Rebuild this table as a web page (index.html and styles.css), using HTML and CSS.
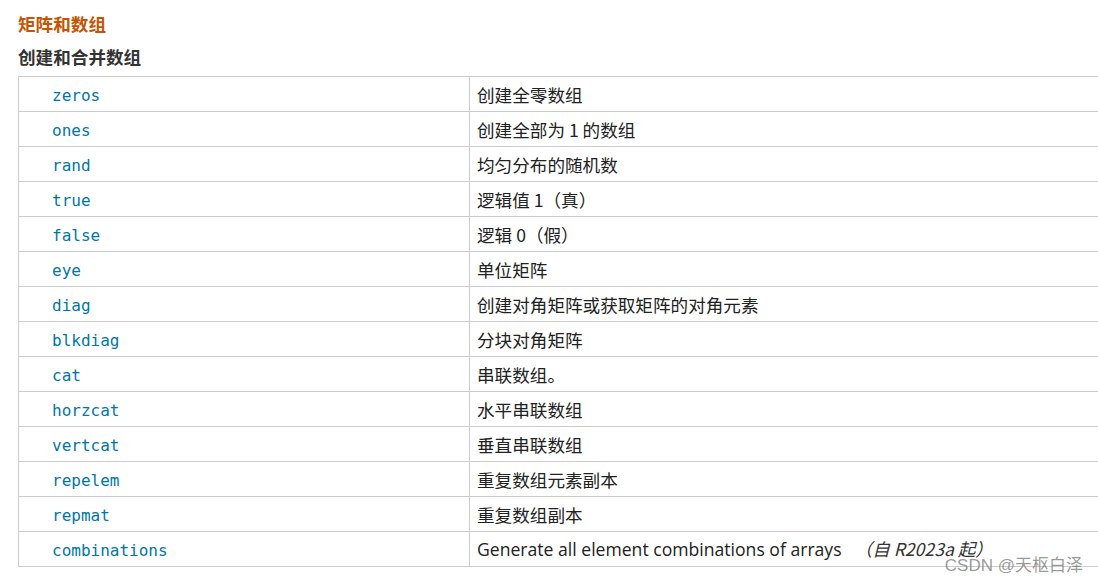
FILE: index.html
```html
<!DOCTYPE html>
<html lang="zh">
<head>
<meta charset="utf-8">
<link rel="stylesheet" href="styles.css">
</head>
<body>
<div class="page">
  <h2 class="title">矩阵和数组</h2>
  <h3 class="subtitle">创建和合并数组</h3>
  <table class="ref">
    <tr><td class="fn"><code>zeros</code></td><td class="desc">创建全零数组</td></tr>
    <tr><td class="fn"><code>ones</code></td><td class="desc">创建全部为 1 的数组</td></tr>
    <tr><td class="fn"><code>rand</code></td><td class="desc">均匀分布的随机数</td></tr>
    <tr><td class="fn"><code>true</code></td><td class="desc">逻辑值 1（真）</td></tr>
    <tr><td class="fn"><code>false</code></td><td class="desc">逻辑 0（假）</td></tr>
    <tr><td class="fn"><code>eye</code></td><td class="desc">单位矩阵</td></tr>
    <tr><td class="fn"><code>diag</code></td><td class="desc">创建对角矩阵或获取矩阵的对角元素</td></tr>
    <tr><td class="fn"><code>blkdiag</code></td><td class="desc">分块对角矩阵</td></tr>
    <tr><td class="fn"><code>cat</code></td><td class="desc">串联数组。</td></tr>
    <tr><td class="fn"><code>horzcat</code></td><td class="desc">水平串联数组</td></tr>
    <tr><td class="fn"><code>vertcat</code></td><td class="desc">垂直串联数组</td></tr>
    <tr><td class="fn"><code>repelem</code></td><td class="desc">重复数组元素副本</td></tr>
    <tr><td class="fn"><code>repmat</code></td><td class="desc">重复数组副本</td></tr>
    <tr><td class="fn"><code>combinations</code></td><td class="desc"><span class="en">Generate all element combinations of arrays</span> <em class="since">（自 R2023a 起）</em></td></tr>
  </table>
  <div class="watermark">CSDN @天枢白泽</div>
</div>
</body>
</html>
```
FILE: styles.css
```css
html, body {
  margin: 0;
  padding: 0;
  background: #ffffff;
  overflow: hidden;
}
.page {
  position: relative;
  width: 1098px;
  height: 583px;
  padding: 12px 0 0 18px;
  box-sizing: border-box;
  font-family: "Noto Sans CJK SC", "Noto Sans", sans-serif;
  color: #212121;
}
.title {
  margin: 0;
  font-size: 17.6px;
  line-height: 24px;
  font-weight: bold;
  color: #c45400;
}
.subtitle {
  margin: 9px 0 7px 0;
  font-size: 17.6px;
  line-height: 24px;
  font-weight: bold;
  color: #333333;
}
.ref {
  border-collapse: collapse;
  width: 1110px;
  table-layout: fixed;
}
.ref td {
  border: 1px solid #cccccc;
  height: 35px;
  padding: 0;
  vertical-align: middle;
  box-sizing: border-box;
}
.ref td.fn {
  width: 451px;
  padding-left: 33px;
}
.ref td.desc {
  padding-left: 7px;
  font-size: 17.6px;
  line-height: 23px;
}
code {
  font-family: "DejaVu Sans Mono", monospace;
  font-size: 16px;
  color: #0076a8;
}
.en {
  font-family: "Open Sans", sans-serif;
  font-size: 17.6px;
}
.since {
  font-style: italic;
  color: #333333;
  margin-left: 9px;
}
.watermark {
  position: absolute;
  right: 15px;
  bottom: 7px;
  font-family: "Liberation Sans", "Noto Sans CJK SC", sans-serif;
  font-size: 17px;
  color: rgba(120, 120, 120, 0.75);
}
```
